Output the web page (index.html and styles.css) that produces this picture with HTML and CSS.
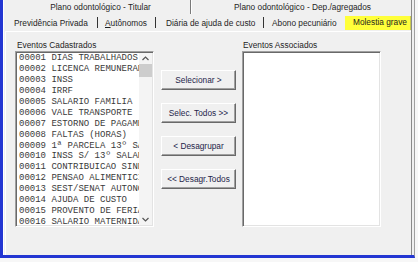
FILE: index.html
```html
<!DOCTYPE html>
<html lang="pt-BR">
<head>
  <meta charset="UTF-8" />
  <title>Eventos</title>
  <link rel="stylesheet" href="styles.css">
</head>
<body>
  <div class="window">
    <div class="inner">
      <div class="tab-row top-row">
        <div class="tab tab-titular">Plano odontológico - Titular</div>
        <span class="sep-full"></span>
        <div class="tab tab-dep">Plano odontológico - Dep./agregados</div>
      </div>
      <div class="tab-row second-row">
        <div class="tab w-prev">Previdência Privada</div>
        <span class="sep"></span>
        <div class="tab w-aut"><u>A</u>utônomos</div>
        <span class="sep"></span>
        <div class="tab w-dia">Diária de ajuda de custo</div>
        <span class="sep"></span>
        <div class="tab w-abo">Abono pecuniário</div>
        <div class="tab active">Molestia grave</div>
      </div>

      <div class="panel">
        <div class="col">
          <div class="label">Eventos Cadastrados</div>
          <div class="listbox">
            <ul class="items">
              <li>00001 DIAS TRABALHADOS</li>
              <li>00002 LICENCA REMUNERADA</li>
              <li>00003 INSS</li>
              <li>00004 IRRF</li>
              <li>00005 SALARIO FAMILIA</li>
              <li>00006 VALE TRANSPORTE</li>
              <li>00007 ESTORNO DE PAGAMENTO</li>
              <li>00008 FALTAS (HORAS)</li>
              <li>00009 1ª PARCELA 13º SALARIO</li>
              <li>00010 INSS S/ 13º SALARIO</li>
              <li>00011 CONTRIBUICAO SINDICAL</li>
              <li>00012 PENSAO ALIMENTICIA</li>
              <li>00013 SEST/SENAT AUTONOMO</li>
              <li>00014 AJUDA DE CUSTO</li>
              <li>00015 PROVENTO DE FERIAS</li>
              <li>00016 SALARIO MATERNIDADE</li>
            </ul>
            <div class="scroll">
              <div class="arrow">
                <svg width="7" height="5" viewBox="0 0 7 5"><path d="M0.5 4 L3.5 1 L6.5 4" fill="none" stroke="#555" stroke-width="1.2"/></svg>
              </div>
              <div class="thumb"></div>
              <div class="track"></div>
              <div class="arrow">
                <svg width="7" height="5" viewBox="0 0 7 5"><path d="M0.5 1 L3.5 4 L6.5 1" fill="none" stroke="#555" stroke-width="1.2"/></svg>
              </div>
            </div>
          </div>
        </div>

        <div class="buttons">
          <button>Selecionar &gt;</button>
          <button>Selec. Todos &gt;&gt;</button>
          <button>&lt; Desagrupar</button>
          <button>&lt;&lt; Desagr.Todos</button>
        </div>

        <div class="col right-col">
          <div class="label">Eventos Associados</div>
          <div class="listbox empty"></div>
        </div>
      </div>
    </div>
  </div>
</body>
</html>
```

FILE: styles.css
```css
* {
  margin: 0;
  padding: 0;
  box-sizing: border-box;
}

body {
  width: 418px;
  height: 262px;
  background-color: #f7f7f7;
  font-family: "Liberation Sans", Arial, sans-serif;
  font-size: 8.3px;
  color: #1e1e1e;
  overflow: hidden;
}

.window {
  width: 415px;
  height: 258px;
  background-color: #f0f0f0;
  border-left: 3px solid #2336d2;
  border-bottom: 3px solid #2336d2;
  border-right: 1px solid #a0a0a0;
  box-shadow: inset 1px 0 0 #ffffff;
}

.inner {
  height: 100%;
  margin-right: 2px;
  border-right: 1px solid #8a8a8a;
  display: flex;
  flex-direction: column;
}

/* tabs */
.tab-row {
  display: flex;
  align-items: center;
  flex: none;
}
.top-row {
  height: 14px;
}
.second-row {
  height: 17px;
}
.tab {
  flex: none;
  white-space: nowrap;
  line-height: 12px;
}
.tab-titular {
  width: 187px;
  text-align: center;
  padding-left: 8px;
}
.tab-dep {
  padding-left: 42px;
}
.sep-full {
  width: 1px;
  height: 14px;
  background-color: #7a7a7a;
  box-shadow: 1px 0 0 #fff;
  margin-right: 1px;
}
.sep {
  flex: none;
  width: 1px;
  height: 11px;
  background-color: #333;
}
.w-prev { width: 94px; padding-left: 11px; }
.w-aut { width: 57px; padding-left: 7px; }
.w-dia { width: 107px; padding-left: 10px; }
.w-abo { width: 81px; padding-left: 8px; }
.active {
  width: 66px;
  height: 14px;
  margin-top: 1px;
  padding-left: 8px;
  background-color: #ffff3a;
  border-right: 1px solid #c8c850;
}

/* panel */
.panel {
  flex: 1;
  margin-left: 2px;
  border-top: 1px solid #ffffff;
  border-left: 1px solid #ffffff;
  padding: 9px 0 0 9px;
  display: flex;
  align-items: flex-start;
}
.col {
  width: 139px;
  flex: none;
}
.label {
  height: 10px;
  line-height: 9px;
  padding-left: 2px;
}
.right-col .label {
  padding-left: 1px;
}
.listbox {
  height: 176px;
  background-color: #ffffff;
  border-top: 1px solid #a0a0a0;
  border-left: 1px solid #a0a0a0;
  border-right: 1px solid #ffffff;
  border-bottom: 1px solid #ffffff;
  box-shadow: inset 1px 1px 0 #696969, inset -1px -1px 0 #e3e3e3;
  display: flex;
  overflow: hidden;
}
.items {
  list-style: none;
  flex: 1;
  padding: 1px 0 0 3px;
  overflow: hidden;
  font-family: "Liberation Mono", "Courier New", monospace;
  font-size: 9px;
  line-height: 10.93px;
  color: #3a3a3a;
  white-space: nowrap;
}
.scroll {
  width: 13px;
  flex: none;
  margin: 1px 1px 1px 0;
  background-color: #f4f4f4;
  display: flex;
  flex-direction: column;
}
.arrow {
  height: 11px;
  display: flex;
  align-items: center;
  justify-content: center;
}
.thumb {
  height: 13px;
  background-color: #cdcdcd;
}
.track {
  flex: 1;
}

/* buttons */
.buttons {
  width: 75px;
  flex: none;
  margin: 29px 0 0 7px;
  display: flex;
  flex-direction: column;
  gap: 13px;
}
.buttons button {
  height: 20px;
  font-family: "Liberation Sans", Arial, sans-serif;
  font-size: 8.3px;
  color: #25254a;
  background-color: #f0f0f0;
  border: 1px solid;
  border-color: #ffffff #696969 #696969 #ffffff;
  box-shadow: inset -1px -1px 0 #a0a0a0;
}

.right-col {
  margin-left: 6px;
}
```
